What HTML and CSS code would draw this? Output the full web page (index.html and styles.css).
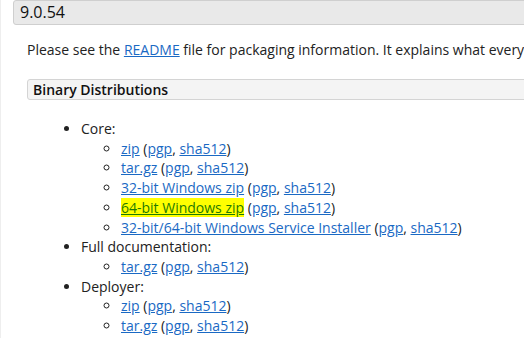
FILE: index.html
```html
<!DOCTYPE html>
<html lang="en">
<head>
  <meta charset="UTF-8" />
  <meta name="viewport" content="width=device-width, initial-scale=1.0" />
  <title>Apache Tomcat 9 Downloads</title>
  <link rel="stylesheet" href="styles.css">
</head>

<body>

  <div class="content">
    <h3 class="version">9.0.54</h3>
    <div class="section">
      <p class="intro">Please see the <a href="#">README</a> file for packaging information. It explains what every distribution contains.</p>

      <h4 class="sub">Binary Distributions</h4>
      <div class="subsection">
        <ul class="dist">
          <li>Core:
            <ul>
              <li><a href="#">zip</a> (<a href="#">pgp</a>, <a href="#">sha512</a>)</li>
              <li><a href="#">tar.gz</a> (<a href="#">pgp</a>, <a href="#">sha512</a>)</li>
              <li><a href="#">32-bit Windows zip</a> (<a href="#">pgp</a>, <a href="#">sha512</a>)</li>
              <li><a href="#" class="found">64-bit Windows zip</a> (<a href="#">pgp</a>, <a href="#">sha512</a>)</li>
              <li><a href="#">32-bit/64-bit Windows Service Installer</a> (<a href="#">pgp</a>, <a href="#">sha512</a>)</li>
            </ul>
          </li>
          <li>Full documentation:
            <ul>
              <li><a href="#">tar.gz</a> (<a href="#">pgp</a>, <a href="#">sha512</a>)</li>
            </ul>
          </li>
          <li>Deployer:
            <ul>
              <li><a href="#">zip</a> (<a href="#">pgp</a>, <a href="#">sha512</a>)</li>
              <li><a href="#">tar.gz</a> (<a href="#">pgp</a>, <a href="#">sha512</a>)</li>
            </ul>
          </li>
        </ul>
      </div>
    </div>
  </div>

</body>
</html>
```

FILE: styles.css
```css
* {
  margin: 0;
  padding: 0;
  box-sizing: border-box;
}

body {
  font-family: 'Open Sans', sans-serif;
  font-size: 14px;
  color: #222;
  background-color: #fff;
  overflow: hidden;
}

.content {
  border-left: 1px solid #eee;
  min-height: 100vh;
  padding-left: 12px;
}

a {
  color: #1a69c4;
  text-decoration: underline;
}

.version {
  margin-right: -20px;
  padding: 0 6px;
  height: 25px;
  line-height: 23px;
  font-size: 16px;
  font-weight: 400;
  color: #111;
  background-color: #e9e9e9;
  border: 1px solid #cfcfcf;
  border-radius: 3px;
}

.section {
  padding-left: 14px;
}

.intro {
  margin-top: 15px;
  line-height: 20px;
  white-space: nowrap;
}

.sub {
  margin-top: 19px;
  margin-right: -20px;
  padding: 0 5px;
  height: 21px;
  line-height: 19px;
  font-size: 14px;
  font-weight: 600;
  color: #111;
  background-color: #f4f4f4;
  border: 1px solid #d4d4d4;
  border-radius: 3px;
}

.dist {
  margin-top: 19px;
  padding-left: 54px;
  line-height: 19.7px;
  white-space: nowrap;
}

.dist ul {
  padding-left: 40px;
  list-style-type: circle;
}

.found {
  background-color: #ffff00;
  color: #1f7a00;
}
```
